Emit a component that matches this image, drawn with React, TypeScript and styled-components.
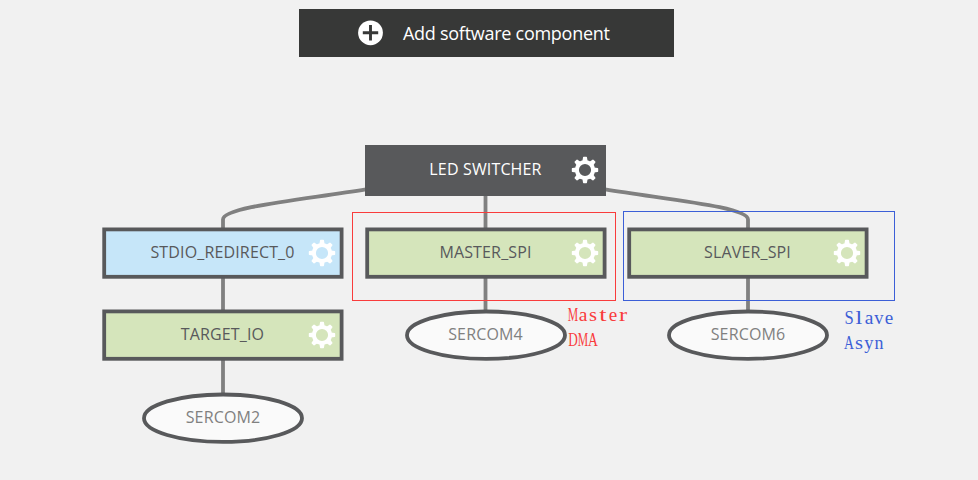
import React from "react";
import styled, { createGlobalStyle } from "styled-components";

const GlobalStyle = createGlobalStyle`
  body {
    margin: 0;
    background: #f1f1f1;
    font-family: "Open Sans", "Noto Sans", sans-serif;
  }
`;

const Page = styled.main`
  display: flex;
  flex-direction: column;
  width: 978px;
  height: 480px;
  overflow: hidden;
  background: #f1f1f1;
`;

const Toolbar = styled.header`
  display: flex;
  justify-content: center;
  padding: 9px 5px 0 0;
`;

const AddButton = styled.button`
  display: flex;
  align-items: center;
  gap: 20px;
  width: 375px;
  height: 48px;
  padding: 0 0 0 58px;
  border: 0;
  background: #373837;
  color: #fff;
  font: 400 18px "Open Sans", "Noto Sans", sans-serif;
  letter-spacing: -0.27px;
  white-space: nowrap;
`;

const Canvas = styled.section`
  position: relative;
  flex: 1;
`;

const Wires = styled.svg`
  display: block;
  fill: none;
  stroke: #808080;
  stroke-width: 3.8;
`;

type Kind = "root" | "middleware" | "driver";

const fills: Record<Kind, string> = {
  root: "#58595b",
  middleware: "#c6e6f9",
  driver: "#d5e5bb",
};

const Node = styled.div<{ $x: number; $y: number; $w: number; $color: string }>`
  position: absolute;
  left: ${(p) => p.$x}px;
  top: ${(p) => p.$y}px;
  display: grid;
  width: ${(p) => p.$w}px;
  height: 52px;
  color: ${(p) => p.$color};
  > * {
    grid-area: 1 / 1;
  }
`;

const Frame = styled.svg`
  display: block;
  overflow: visible;
`;

const Label = styled.span`
  place-self: center;
  padding-bottom: 2px;
  font-size: 16px;
  line-height: 22px;
  letter-spacing: 0.15px;
  white-space: nowrap;
`;

const GearSvg = styled.svg`
  place-self: center end;
  margin-right: 7px;
`;

const Highlight = styled.div<{ $x: number; $y: number; $w: number; $h: number; $color: string }>`
  position: absolute;
  left: ${(p) => p.$x}px;
  top: ${(p) => p.$y}px;
  width: ${(p) => p.$w}px;
  height: ${(p) => p.$h}px;
  box-sizing: border-box;
  border: 1px solid ${(p) => p.$color};
`;

const Note = styled.div<{ $x: number; $y: number; $color: string }>`
  position: absolute;
  left: ${(p) => p.$x}px;
  top: ${(p) => p.$y}px;
  color: ${(p) => p.$color};
  font: 19.5px/25px "Liberation Serif", serif;
`;

const NoteLine = styled.div`
  display: flex;
  height: 25px;
`;

const Cell = styled.span<{ $scale: number }>`
  display: flex;
  justify-content: center;
  width: 10px;
  transform: scaleX(${(p) => p.$scale});
`;

const glyphScale: Record<string, number> = {
  M: 0.6, D: 0.68, A: 0.7, S: 0.85, a: 1, s: 1.05, t: 1.35,
  e: 0.98, r: 1.25, l: 1.25, v: 0.95, y: 0.95, n: 0.92,
};

function Gear() {
  return (
    <GearSvg width="28" height="28" viewBox="-14 -14 28 28">
      <circle r="8.1" fill="none" stroke="#fff" strokeWidth="4" />
      {[0, 45, 90, 135, 180, 225, 270, 315].map((a) => (
        <path key={a} d="M-2.6-9-2-12.6Q-2-13.2-1.3-13.2H1.3Q2-13.2 2-12.6L2.6-9Z" fill="#fff" transform={`rotate(${a})`} />
      ))}
    </GearSvg>
  );
}

function ComponentNode({ x, y, kind, name }: { x: number; y: number; kind: Kind; name: string }) {
  const root = kind === "root";
  return (
    <Node $x={x} $y={y} $w={241} $color={root ? "#fff" : "#58595b"}>
      <Frame width="241" height="52">
        {root ? (
          <rect y="1" width="241" height="51" fill={fills.root} />
        ) : (
          <rect x="2.2" y="2.4" width="237.4" height="47.4" fill={fills[kind]} stroke="#58595b" strokeWidth="3.8" />
        )}
      </Frame>
      <Label>{name}</Label>
      <Gear />
    </Node>
  );
}

function PeripheralNode({ x, y, name }: { x: number; y: number; name: string }) {
  return (
    <Node $x={x} $y={y} $w={162} $color="#808080">
      <Frame width="162" height="52">
        <ellipse cx="81" cy="26.2" rx="79" ry="23.7" fill="#fafafa" stroke="#58595b" strokeWidth="3.8" />
      </Frame>
      <Label>{name}</Label>
    </Node>
  );
}

function Annotation({ x, y, color, lines }: { x: number; y: number; color: string; lines: string[] }) {
  return (
    <Note $x={x} $y={y} $color={color}>
      {lines.map((line) => (
        <NoteLine key={line}>
          {[...line].map((c, i) => (
            <Cell key={i} $scale={glyphScale[c] ?? 1}>{c}</Cell>
          ))}
        </NoteLine>
      ))}
    </Note>
  );
}

export default function App() {
  return (
    <>
      <GlobalStyle />
      <Page>
        <Toolbar>
          <AddButton>
            <svg width="26" height="26" viewBox="0 0 26 26">
              <circle cx="13.5" cy="12.8" r="12.4" fill="#fff" />
              <path d="M13.5 5v15.5M5.8 12.8h15.4" stroke="#373837" strokeWidth="2.9" />
            </svg>
            <span>Add software component</span>
          </AddButton>
        </Toolbar>
        <Canvas>
          <Wires width="978" height="423" viewBox="0 57 978 423">
            <path d="M366 189.3C300 200 223 207 223 219.5V230" />
            <path d="M605 189.3C671 200 748 207 748 219.5V230" />
            <path d="M485.5 194v36M485.5 276v36M748 276v36M223 276v36M223 359v36" />
          </Wires>
          <ComponentNode x={365} y={87} kind="root" name="LED SWITCHER" />
          <ComponentNode x={102} y={170} kind="middleware" name="STDIO_REDIRECT_0" />
          <ComponentNode x={365} y={170} kind="driver" name="MASTER_SPI" />
          <ComponentNode x={627} y={170} kind="driver" name="SLAVER_SPI" />
          <ComponentNode x={102} y={252} kind="driver" name="TARGET_IO" />
          <PeripheralNode x={404.5} y={252} name="SERCOM4" />
          <PeripheralNode x={667} y={252} name="SERCOM6" />
          <PeripheralNode x={142} y={335} name="SERCOM2" />
          <Highlight $x={352} $y={155} $w={264} $h={89} $color="#f93c3c" />
          <Highlight $x={623} $y={154} $w={272} $h={90} $color="#3c5fd7" />
          <Annotation x={568} y={245} color="#f93c3c" lines={["Master", "DMA"]} />
          <Annotation x={844} y={248} color="#3c5fd7" lines={["Slave", "Asyn"]} />
        </Canvas>
      </Page>
    </>
  );
}
